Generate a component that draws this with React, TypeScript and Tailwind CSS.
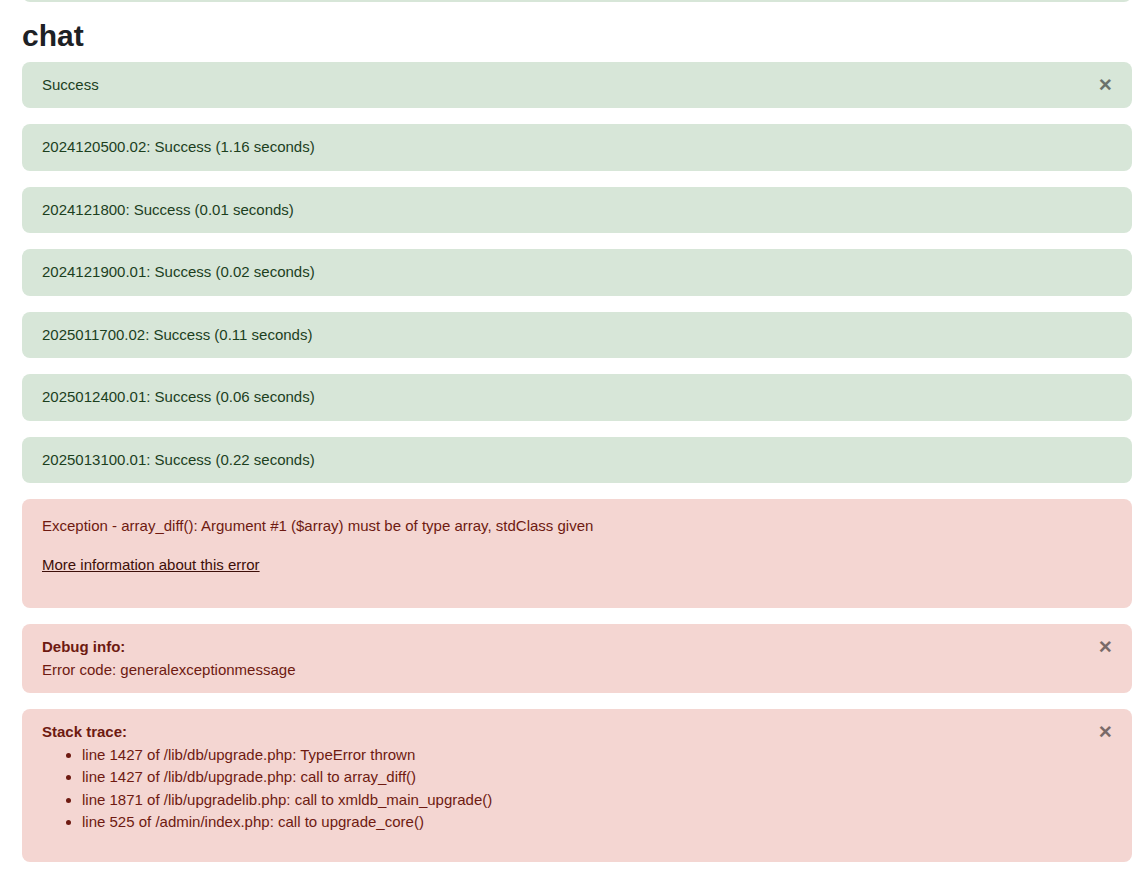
import React from "react";

const successItems = [
  "2024120500.02: Success (1.16 seconds)",
  "2024121800: Success (0.01 seconds)",
  "2024121900.01: Success (0.02 seconds)",
  "2025011700.02: Success (0.11 seconds)",
  "2025012400.01: Success (0.06 seconds)",
  "2025013100.01: Success (0.22 seconds)",
];

const stack = [
  "line 1427 of /lib/db/upgrade.php: TypeError thrown",
  "line 1427 of /lib/db/upgrade.php: call to array_diff()",
  "line 1871 of /lib/upgradelib.php: call to xmldb_main_upgrade()",
  "line 525 of /admin/index.php: call to upgrade_core()",
];

function Close() {
  return (
    <button
      type="button"
      className="absolute top-0 right-0 px-5 py-3 text-[22.5px] font-bold leading-none text-black opacity-50"
      aria-label="Close"
    >
      ×
    </button>
  );
}

export default function App() {
  return (
    <div
      className="min-h-screen bg-white px-[22px] text-[15px] leading-[22.5px]"
      style={{ fontFamily: '"Liberation Sans", Arial, sans-serif' }}
    >
      <div className="w-[1110px]">
        <div className="-mt-[44px] h-[46px] rounded-lg bg-[#d7e6d8]" />
        <h2 className="mt-[15.5px] mb-2 text-[30px] font-bold leading-[36px] text-[#1d2125]">
          chat
        </h2>

        <div className="relative mb-4 rounded-lg bg-[#d7e6d8] px-5 py-3 text-[#1c3f1e]">
          Success
          <Close />
        </div>

        {successItems.map((t) => (
          <div
            key={t}
            className="mb-4 rounded-lg bg-[#d7e6d8] px-5 py-3 text-[#1c3f1e]"
          >
            {t}
          </div>
        ))}

        <div className="mb-4 rounded-lg bg-[#f4d6d2] px-5 pt-[15.5px] pb-[16px] text-[#6e1a11]">
          <p className="mb-[16.5px]">
            Exception - array_diff(): Argument #1 ($array) must be of type array,
            stdClass given
          </p>
          <p className="mb-4">
            <a href="#" className="text-[#3d0f09] underline">
              More information about this error
            </a>
          </p>
        </div>

        <div className="relative mb-4 rounded-lg bg-[#f4d6d2] px-5 py-3 text-[#6e1a11]">
          <div className="font-bold">Debug info:</div>
          <div>Error code: generalexceptionmessage</div>
          <Close />
        </div>

        <div className="relative mb-4 rounded-lg bg-[#f4d6d2] px-5 py-3 text-[#6e1a11]">
          <div className="font-bold">Stack trace:</div>
          <ul className="mb-4 list-disc pl-10">
            {stack.map((s) => (
              <li key={s}>{s}</li>
            ))}
          </ul>
          <Close />
        </div>
      </div>
    </div>
  );
}
